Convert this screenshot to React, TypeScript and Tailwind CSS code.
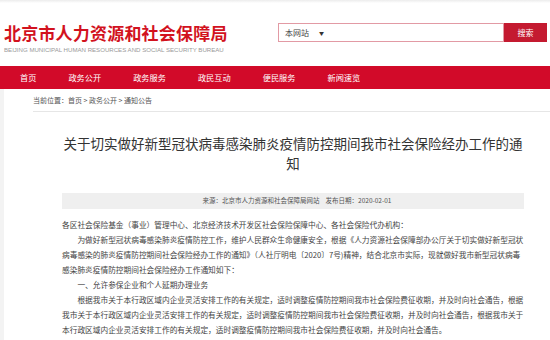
const navItems = ['首页', '政务公开', '政务服务', '政民互动', '便民服务', '新闻速览'];

const paragraphs = [
  { indent: false, text: '各区社会保险基金（事业）管理中心、北京经济技术开发区社会保险保障中心、各社会保险代办机构：' },
  {
    indent: true,
    text: '为做好新型冠状病毒感染肺炎疫情防控工作，维护人民群众生命健康安全，根据《人力资源社会保障部办公厅关于切实做好新型冠状病毒感染的肺炎疫情防控期间社会保险经办工作的通知》（人社厅明电〔2020〕7号)精神，结合北京市实际，现就做好我市新型冠状病毒感染肺炎疫情防控期间社会保险经办工作通知如下：',
  },
  { indent: true, text: '一、允许参保企业和个人延期办理业务' },
  {
    indent: true,
    text: '根据我市关于本行政区域内企业灵活安排工作的有关规定，适时调整疫情防控期间我市社会保险费征收期，并及时向社会通告，根据我市关于本行政区域内企业灵活安排工作的有关规定，适时调整疫情防控期间我市社会保险费征收期，并及时向社会通告，根据我市关于本行政区域内企业灵活安排工作的有关规定，适时调整疫情防控期间我市社会保险费征收期，并及时向社会通告。',
  },
];

export default function App() {
  return (
    <div className="w-[550px] h-[340px] overflow-hidden bg-white font-['Noto_Sans_CJK_SC',sans-serif] text-[#333]">
      <div className="h-[3px] bg-gradient-to-b from-[#ececec] to-white" />
      {/* header */}
      <div className="h-[63px] flex items-start justify-between pl-[4px] pr-[3px]">
        <div className="pt-[19px]">
          <div className="text-[17px] leading-[22px] font-bold text-[#d2121e] tracking-[0.2px]">
            北京市人力资源和社会保障局
          </div>
          <div className="mt-[2px] text-[6.1px] leading-[8px] text-[#9a9a9a] font-['Liberation_Sans',sans-serif] whitespace-nowrap">
            BEIJING MUNICIPAL HUMAN RESOURCES AND SOCIAL SECURITY BUREAU
          </div>
        </div>
        <div className="mt-[20px] flex h-[19px]">
          <div className="w-[226px] border border-[#e29aa4] flex items-center pl-[6px] text-[8px] text-[#444]">
            本网站
            <span className="ml-[10px] text-[5px] text-[#333]">▼</span>
          </div>
          <div className="w-[43px] bg-[#c41a30] text-white text-[8px] flex items-center justify-center">搜索</div>
        </div>
      </div>
      {/* nav */}
      <div className="h-[23px] bg-[#d20a29] flex items-center gap-[32px] pl-[20px]">
        {navItems.map((item) => (
          <div key={item} className="text-[8.2px] text-white leading-none">
            {item}
          </div>
        ))}
      </div>
      {/* body */}
      <div className="flex h-[251px]">
        <div className="w-[4px] bg-[#f3f3f3]" />
        <div className="flex-1">
          <div className="ml-[29px] h-[23px] border-b border-[#e6e6e6] flex items-center text-[7px] text-[#555]">
            当前位置：首页 &gt; 政务公开 &gt; 通知公告
          </div>
          <div className="ml-[58px] w-[462px]">
            <h1 className="mt-[21px] text-[13.5px] leading-[20px] text-center text-[#333] font-normal">
              关于切实做好新型冠状病毒感染肺炎疫情防控期间我市社会保险经办工作的通知
            </h1>
            <div className="mt-[20px] h-[16px] bg-[#efefef] flex items-center justify-center text-[6.5px] text-[#555] gap-[6px]">
              <span className="ml-[8px]">来源：北京市人力资源和社会保障局网站</span>
              <span>发布日期：2020-02-01</span>
            </div>
            <div className="mt-[8px] text-[7.7px] leading-[15px] text-[#444]">
              {paragraphs.map((p, i) => (
                <p key={i} className={p.indent ? 'indent-[2em]' : ''}>
                  {p.text}
                </p>
              ))}
            </div>
          </div>
        </div>
      </div>
    </div>
  );
}
